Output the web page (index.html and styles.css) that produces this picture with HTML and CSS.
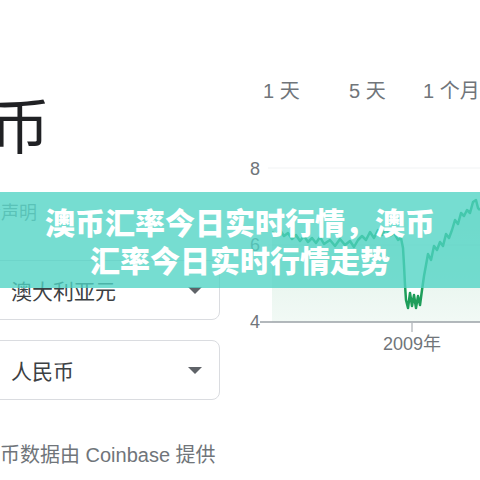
FILE: index.html
```html
<!DOCTYPE html>
<html lang="zh-CN">
<head>
<meta charset="utf-8">
<link rel="stylesheet" href="styles.css">
</head>
<body>
<div class="page">
  <div class="left">
    <div class="title">澳币</div>
    <div class="note">免责声明</div>
    <div class="select select-from"><span>澳大利亚元</span><i class="caret"></i></div>
    <div class="select select-to"><span>人民币</span><i class="caret"></i></div>
    <div class="source">货币数据由 Coinbase 提供</div>
  </div>
  <div class="right">
    <div class="tabs"><span>1 天</span><span>5 天</span><span>1 个月</span></div>
    <svg class="chart" width="240" height="210" viewBox="0 0 240 210">
      <defs>
        <linearGradient id="fillg" x1="0" y1="0" x2="0" y2="1">
          <stop offset="0" stop-color="#1e9e5a" stop-opacity="0.16"/>
          <stop offset="1" stop-color="#1e9e5a" stop-opacity="0.06"/>
        </linearGradient>
      </defs>
      <line x1="28" y1="18" x2="240" y2="18" class="grid"/>
      <line x1="28" y1="95" x2="240" y2="95" class="grid"/>
      <text x="10" y="25" class="lbl">8</text>
      <text x="10" y="101" class="lbl">6</text>
      <text x="10" y="178" class="lbl">4</text>
      <path class="area" d="M32,82 L36,85 L40,80 L44,86 L48,83 L52,89 L56,85 L60,91 L64,86 L68,92 L72,88 L76,93 L80,87 L84,94 L90,90 L95,96 L100,89 L105,95 L110,91 L114,97 L118,90 L122,86 L126,90 L130,82 L134,88 L138,80 L142,85 L146,79 L150,86 L154,83 L158,90 L161,88 L163,98 L164,115 L165,135 L166,150 L168,158 L170,143 L172,156 L174,145 L176,158 L178,146 L180,155 L182,140 L184,126 L186,115 L188,104 L191,110 L194,96 L197,100 L200,92 L203,96 L206,84 L209,88 L212,80 L215,70 L218,74 L221,63 L224,66 L227,60 L230,63 L233,52 L236,50 L238,58 L240,60 L240,172 L32,172 Z"/>
      <polyline class="line" points="32,82 36,85 40,80 44,86 48,83 52,89 56,85 60,91 64,86 68,92 72,88 76,93 80,87 84,94 90,90 95,96 100,89 105,95 110,91 114,97 118,90 122,86 126,90 130,82 134,88 138,80 142,85 146,79 150,86 154,83 158,90 161,88 163,98 164,115 165,135 166,150 168,158 170,143 172,156 174,145 176,158 178,146 180,155 182,140 184,126 186,115 188,104 191,110 194,96 197,100 200,92 203,96 206,84 209,88 212,80 215,70 218,74 221,63 224,66 227,60 230,63 233,52 236,50 238,58 240,60"/>
      <line x1="20" y1="172" x2="240" y2="172" class="axis"/>
      <line x1="172" y1="173" x2="172" y2="182" class="tick"/>
      <text x="172" y="200" class="lbl mid">2009年</text>
    </svg>
  </div>
  <div class="banner">澳币汇率今日实时行情，澳币<br>汇率今日实时行情走势</div>
</div>
</body>
</html>
```

FILE: styles.css
```css
html, body {
  margin: 0;
  padding: 0;
  background: #fff;
}
body {
  width: 480px;
  height: 480px;
  overflow: hidden;
  font-family: "Liberation Sans", "Noto Sans CJK SC", sans-serif;
}
.page {
  position: relative;
  display: flex;
  width: 480px;
  height: 480px;
  overflow: hidden;
}
.left {
  width: 240px;
  flex: none;
  display: flex;
  flex-direction: column;
}
.title {
  margin-top: 93px;
  margin-left: -70px;
  font-family: "Noto Sans CJK SC", sans-serif;
  font-size: 60px;
  line-height: 60px;
  color: #202124;
  white-space: nowrap;
}
.note {
  margin-top: 48px;
  margin-left: -35px;
  font-size: 18px;
  line-height: 24px;
  color: #80868b;
  white-space: nowrap;
}
.select {
  box-sizing: border-box;
  width: 240px;
  height: 60px;
  margin-left: -20px;
  padding: 0 17px 0 30px;
  border: 1px solid #dadce0;
  border-radius: 8px;
  display: flex;
  align-items: center;
  justify-content: space-between;
  font-size: 21px;
  color: #3c4043;
  white-space: nowrap;
}
.select-from {
  margin-top: 35px;
}
.select-to {
  margin-top: 20px;
}
.caret {
  width: 0;
  height: 0;
  border-left: 7px solid transparent;
  border-right: 7px solid transparent;
  border-top: 7px solid #5f6368;
}
.source {
  margin-top: 43px;
  margin-left: -20px;
  font-size: 20px;
  line-height: 24px;
  color: #70757a;
  white-space: nowrap;
}
.right {
  flex: none;
  width: 240px;
  display: flex;
  flex-direction: column;
  padding-top: 79px;
}
.tabs {
  display: grid;
  grid-template-columns: 86px 74px auto;
  padding-left: 23px;
  font-size: 20px;
  line-height: 24px;
  color: #70757a;
  white-space: nowrap;
}
.chart {
  display: block;
  margin-top: 47px;
  overflow: visible;
}
.grid {
  stroke: #f1f3f4;
  stroke-width: 1;
}
.axis {
  stroke: #9aa0a6;
  stroke-width: 1.5;
}
.tick {
  stroke: #9aa0a6;
  stroke-width: 1;
}
.lbl {
  font-family: "Liberation Sans", "Noto Sans CJK SC", sans-serif;
  font-size: 18px;
  fill: #70757a;
}
.mid {
  text-anchor: middle;
}
.area {
  fill: url(#fillg);
}
.line {
  fill: none;
  stroke: #1e9e5a;
  stroke-width: 2.5;
  stroke-linejoin: round;
}
.banner {
  position: absolute;
  left: 0;
  right: 0;
  top: 192px;
  height: 96px;
  box-sizing: border-box;
  display: flex;
  align-items: center;
  justify-content: center;
  text-align: center;
  background: rgba(80, 212, 196, 0.78);
  color: #fff;
  font-family: "Noto Sans CJK SC", sans-serif;
  font-weight: 900;
  font-size: 30px;
  line-height: 38px;
}
```
